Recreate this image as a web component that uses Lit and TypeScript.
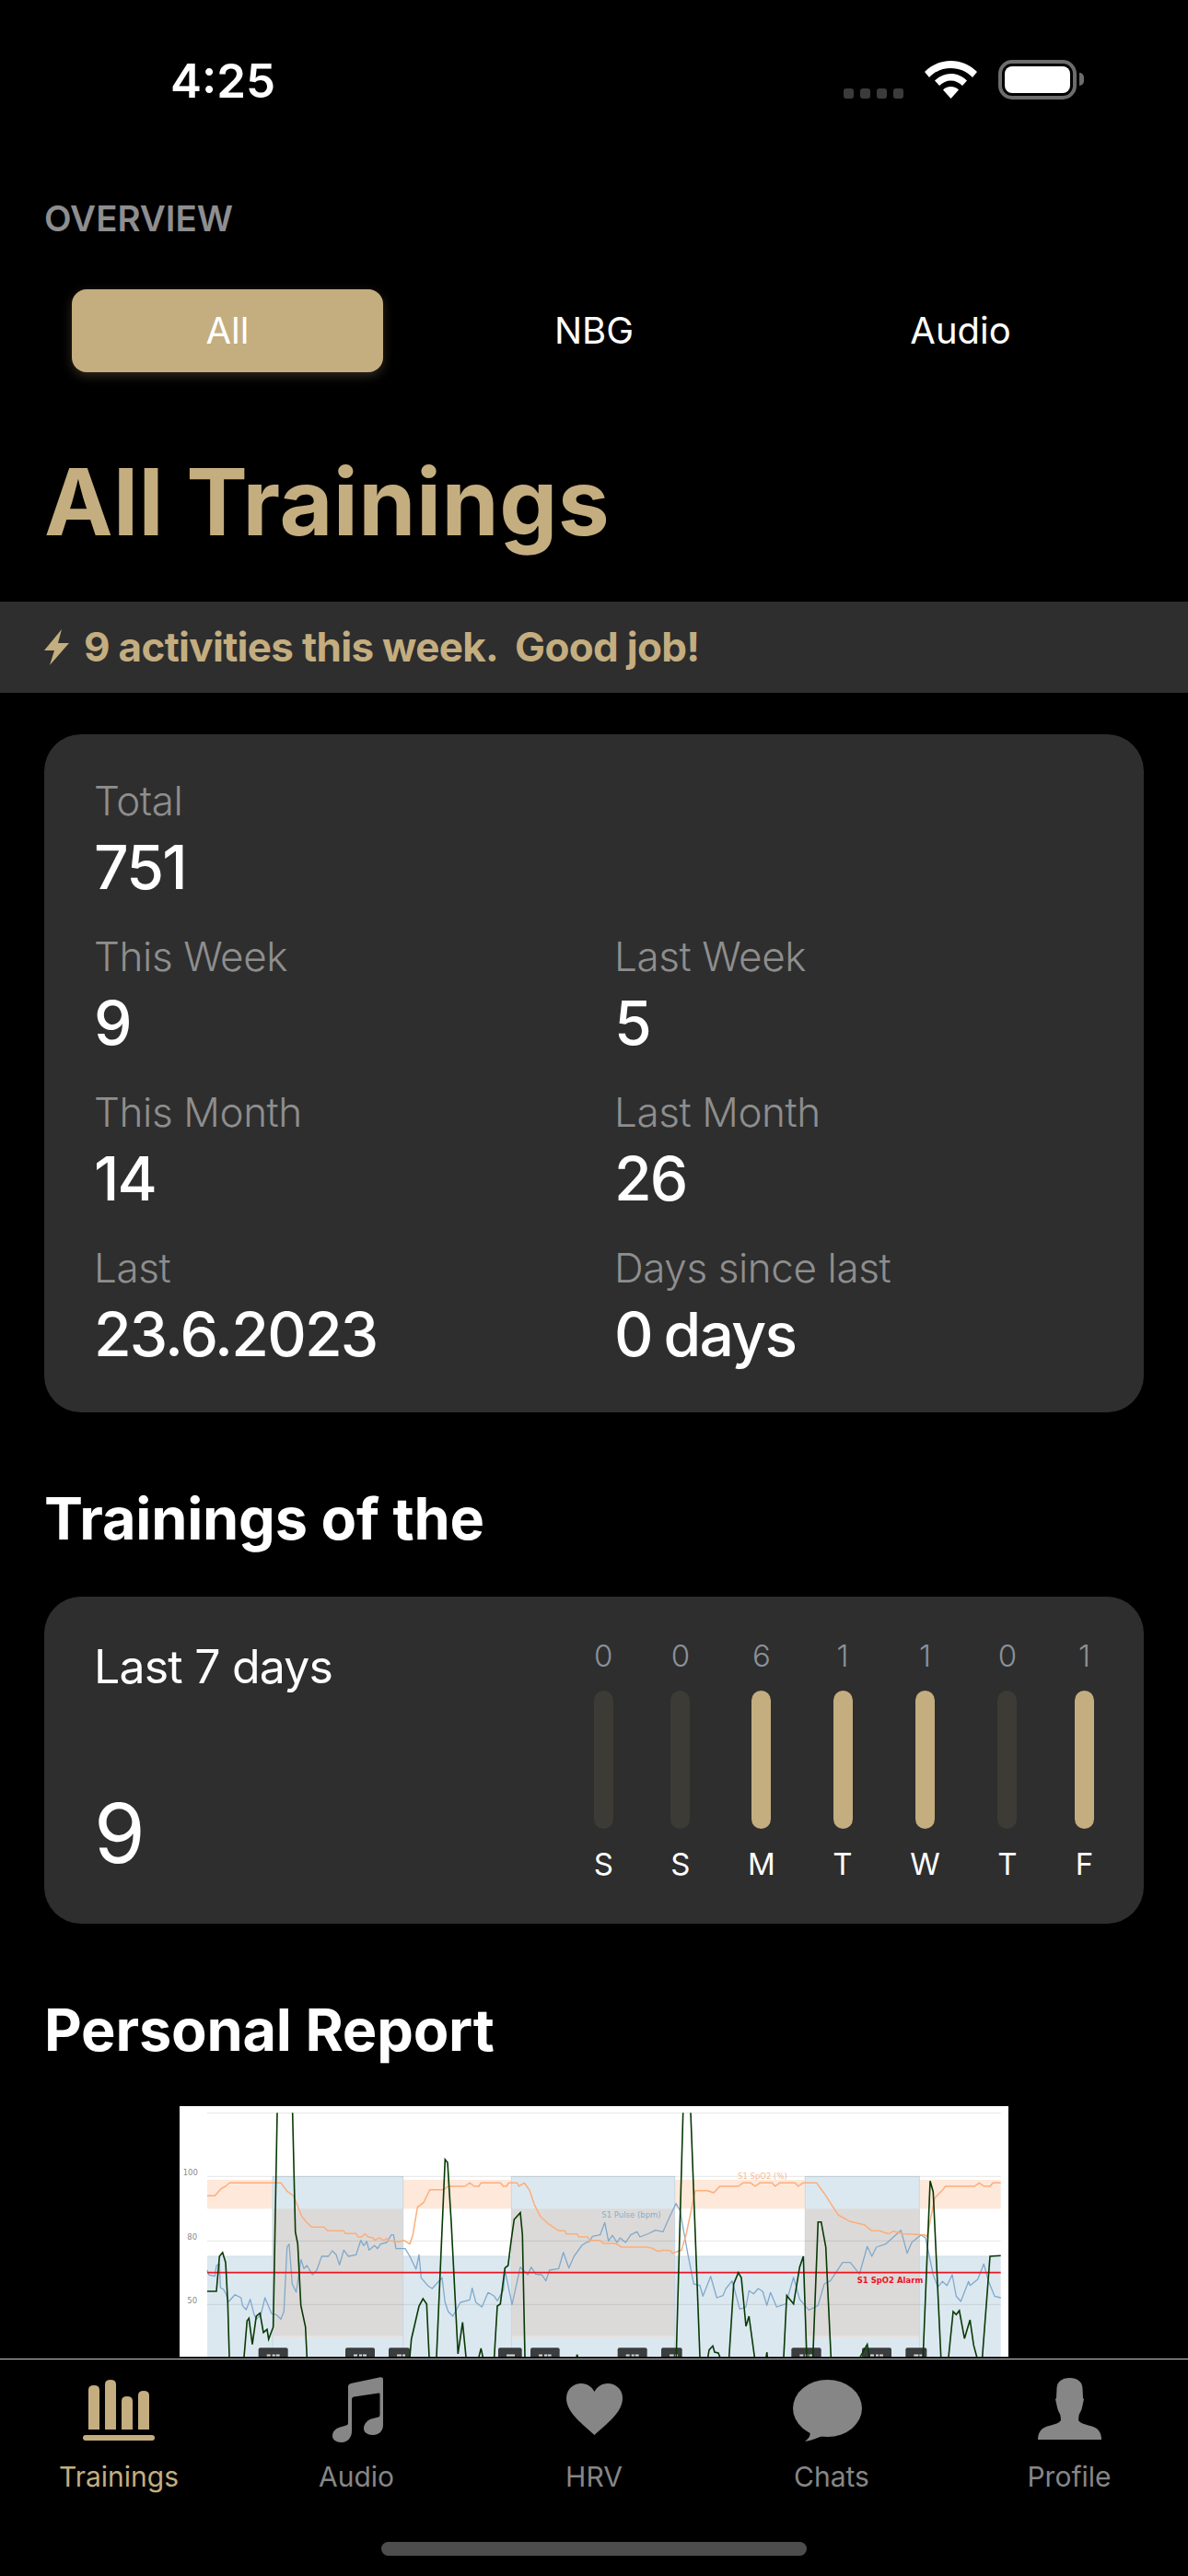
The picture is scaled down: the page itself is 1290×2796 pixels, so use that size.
import { LitElement, css, html, svg } from "lit";
import { customElement } from "lit/decorators.js";

type Pt = [number, number];

// traces are read off the reference crops: "l" points come from the left crop, "r" from the right one
const lx = (x: number) => x / 3 - 5;
const rx = (x: number) => x / 3 + 445;
const py = (y: number) => y / 3 - 7;
const line = (l: Pt[], r: Pt[] = []) =>
  [...l.map(([x, y]) => `${lx(x).toFixed(1)},${py(y).toFixed(1)}`), ...r.map(([x, y]) => `${rx(x).toFixed(1)},${py(y).toFixed(1)}`)].join(" ");

const ORANGE_L: Pt[] = [[105,313],[130,313],[150,290],[165,282],[178,271],[318,271],[345,271],[365,298],[385,312],[395,335],[412,378],[425,395],[445,415],[485,415],[497,427],[550,427],[555,436],[590,436],[596,447],[608,447],[618,437],[630,447],[645,450],[650,458],[665,450],[680,458],[690,452],[700,460],[730,463],[745,458],[765,470],[775,440],[790,350],[810,335],[830,293],[875,293],[890,282],[945,282],[960,271],[975,282],[990,282],[997,271],[1060,271],[1070,282],[1080,282],[1087,271],[1115,271],[1120,282],[1138,271],[1155,295],[1170,340],[1190,380],[1215,403],[1250,427],[1270,427],[1275,437],[1310,437],[1315,447],[1345,447]];
const ORANGE_R: Pt[] = [[0,458],[35,458],[45,468],[85,468],[105,480],[185,480],[200,482],[225,494],[240,490],[265,492],[270,500],[300,490],[315,440],[345,296],[385,296],[405,303],[425,282],[485,282],[500,271],[525,271],[540,282],[555,271],[595,271],[605,282],[620,271],[670,271],[680,282],[695,271],[740,271],[765,305],[810,375],[850,397],[895,407],[920,427],[945,427],[975,437],[990,428],[1020,437],[1035,437],[1090,440],[1100,445],[1125,320],[1150,295],[1160,282],[1255,282],[1270,271],[1285,282],[1305,282],[1315,271],[1340,271]];
const BLUE_L: Pt[] = [[105,555],[110,570],[130,575],[135,540],[145,535],[148,612],[158,618],[165,630],[175,658],[195,635],[215,645],[220,670],[232,684],[245,650],[258,700],[265,715],[280,700],[293,645],[315,697],[330,700],[345,715],[355,690],[365,480],[372,470],[382,600],[395,627],[410,520],[420,550],[430,540],[448,570],[462,555],[478,510],[500,510],[512,492],[525,505],[536,538],[550,490],[565,510],[590,505],[605,458],[615,475],[625,462],[632,490],[650,475],[660,485],[670,470],[690,465],[705,440],[712,440],[720,485],[750,485],[765,510],[785,552],[795,505],[802,580],[825,607],[838,615],[870,580],[880,660],[890,690],[905,705],[930,660],[960,652],[968,613],[980,660],[1000,675],[1020,628],[1040,640],[1050,655],[1070,620],[1075,555],[1098,667],[1115,590],[1125,545],[1150,570],[1160,545],[1175,568],[1195,570],[1208,590],[1220,555],[1250,550],[1265,497],[1283,548],[1300,510],[1325,475],[1340,465]];
const BLUE_R: Pt[] = [[0,462],[10,445],[35,440],[50,400],[62,460],[75,442],[90,465],[100,450],[118,465],[135,440],[155,430],[165,447],[195,435],[215,425],[240,430],[262,380],[282,338],[295,360],[320,500],[340,600],[360,605],[370,640],[395,575],[415,645],[435,638],[445,615],[465,590],[490,682],[510,675],[520,622],[535,632],[550,615],[565,625],[578,670],[590,628],[610,675],[640,665],[665,578],[685,650],[715,685],[745,670],[765,600],[785,590],[825,530],[850,530],[880,568],[905,478],[920,510],[935,480],[965,470],[1015,425],[1035,500],[1050,465],[1080,440],[1095,450],[1120,570],[1135,610],[1150,592],[1165,605],[1182,570],[1195,640],[1210,657],[1235,592],[1240,605],[1265,585],[1285,535],[1300,590],[1320,640],[1340,645]];
const GREEN_L: Pt[][] = [
  [[105,624],[135,624],[145,510],[155,498],[165,530],[172,660],[177,838]],
  [[225,838],[235,720],[241,712],[252,797],[265,705],[277,695],[288,758],[300,748],[305,780],[320,740],[333,43]],
  [[383,43],[392,430],[400,470],[410,670],[425,740],[430,838]],
  [[765,838],[770,780],[785,715],[795,672],[808,648],[820,665],[828,838]],
  [[852,838],[880,195],[888,205],[900,400],[922,828],[937,725],[948,838]],
  [[990,838],[997,810],[1003,838]],
  [[1040,838],[1050,672],[1060,665],[1075,548],[1085,540],[1095,460],[1105,390],[1125,368],[1132,440],[1140,838]],
  [[1308,838],[1310,830],[1312,838]],
];
const GREEN_R: Pt[][] = [
  [[283,838],[305,43]],
  [[330,43],[360,838]],
  [[386,838],[390,815],[402,802],[408,822],[420,825],[425,838]],
  [[455,838],[470,600],[485,563],[495,580],[510,738],[520,705],[538,838]],
  [[576,838],[578,822],[580,838]],
  [[633,838],[643,638],[665,665],[685,545],[697,510],[708,838]],
  [[728,838],[745,398],[755,398],[770,480],[787,838]],
  [[882,838],[905,797],[912,838]],
  [[1087,838],[1110,265],[1120,300],[1145,838]],
  [[1170,838],[1185,690],[1195,700],[1205,687],[1222,778],[1240,717],[1252,800],[1262,838]],
  [[1280,838],[1305,510],[1340,508]],
];
// x ranges of the "sleep" spans, in page-relative chart coordinates
const SPANS: [number, number][] = [[lx(318), lx(743)], [lx(1096), rx(278)], [rx(703), rx(1075)]];
const AWAKE: [number, number][] = [[lx(105), lx(318)], [lx(743), lx(1096)], [rx(278), rx(703)], [rx(1075), rx(1340)]];
const TAGS: [number, number][] = [[lx(272), lx(368)], [lx(555), lx(651)], [lx(696), lx(765)], [lx(1053), lx(1130)], [lx(1158), lx(1253)], [rx(92), rx(188)], [rx(234), rx(302)], [rx(658), rx(755)], [rx(888), rx(984)], [rx(1030), rx(1099)]];

const WEEK = [
  { n: 0, d: "S" }, { n: 0, d: "S" }, { n: 6, d: "M" }, { n: 1, d: "T" },
  { n: 1, d: "W" }, { n: 0, d: "T" }, { n: 1, d: "F" },
];

const STATS = [
  ["This Week", "9"], ["Last Week", "5"],
  ["This Month", "14"], ["Last Month", "26"],
  ["Last", "23.6.2023"], ["Days since last", "0 days"],
];

@customElement("app-root")
export class AppRoot extends LitElement {
  static styles = css`
    :host {
      display: flex;
      flex-direction: column;
      width: 1290px;
      height: 2796px;
      overflow: hidden;
      background: #000;
      color: #fff;
      font-family: Inter, "Liberation Sans", sans-serif;
    }
    .status {
      flex: none;
      height: 215px;
      display: flex;
      align-items: flex-start;
      padding: 65px 121px 0 185px;
      box-sizing: border-box;
    }
    .time {
      font-size: 51px;
      font-weight: 600;
      line-height: 44px;
      margin-top: 1px;
      flex: 1;
    }
    .sys {
      display: flex;
      align-items: flex-end;
      height: 43px;
    }
    .dots {
      display: flex;
      gap: 7px;
      margin: 0 23px 1px 0;
    }
    .dots i {
      width: 11px;
      height: 11px;
      border-radius: 3px;
      background: #3b3b3b;
    }
    .wifi {
      display: block;
      margin: 0 23px 1px 0;
    }
    .battery {
      position: relative;
      width: 85px;
      height: 43px;
      box-sizing: border-box;
      border: 4px solid #6d6d6d;
      border-radius: 15px;
      padding: 3px;
    }
    .battery b {
      display: block;
      height: 100%;
      background: #fff;
      border-radius: 8px;
    }
    .battery::after {
      content: "";
      position: absolute;
      right: -12px;
      top: 10px;
      width: 5px;
      height: 14px;
      background: #6d6d6d;
      border-radius: 0 6px 6px 0;
    }
    main {
      flex: 1;
      min-height: 0;
      overflow: hidden;
    }
    .eyebrow {
      margin: 0 0 0 48px;
      font-size: 38.5px;
      line-height: 44px;
      font-weight: 600;
      color: #8e8e90;
    }
    .tabs {
      display: grid;
      grid-template-columns: repeat(3, 1fr);
      margin: 55px 48px 0;
      height: 90px;
    }
    .tabs span {
      display: flex;
      align-items: center;
      justify-content: center;
      font-size: 40px;
      padding-bottom: 2px;
      margin: 0 30px;
      border-radius: 16px;
    }
    .tabs .on {
      background: #c4ad7f;
      box-shadow: 0 4px 12px rgba(196, 173, 127, 0.25);
    }
    h1 {
      margin: 81px 0 0 48px;
      font-size: 100px;
      line-height: 120px;
      font-weight: 700;
      letter-spacing: 0.4px;
      color: #c4ad7f;
    }
    .banner {
      margin-top: 48px;
      height: 99px;
      background: #2e2e2e;
      display: flex;
      align-items: center;
      gap: 16px;
      padding-left: 48px;
      font-size: 44px;
      font-weight: 700;
      letter-spacing: -0.7px;
      color: #c4ad7f;
      white-space: pre;
    }
    .banner span {
      margin-top: -2px;
    }
    .card {
      margin: 45px 48px 0;
      background: #2e2e2e;
      border-radius: 40px;
    }
    .stats {
      display: grid;
      grid-template-columns: 565px 1fr;
      row-gap: 27px;
      padding: 42px 55px 45px 54px;
    }
    .total {
      grid-column: 1 / -1;
    }
    .label {
      font-size: 44px;
      line-height: 60px;
      font-weight: 300;
      letter-spacing: -0.4px;
      color: #8e8e8e;
    }
    .value {
      margin-top: 2px;
      font-size: 66px;
      line-height: 80px;
      font-weight: 450;
      letter-spacing: -1.8px;
      word-spacing: -3px;
    }
    h2 {
      margin: 75px 0 0 48px;
      font-size: 63px;
      line-height: 80px;
      font-weight: 700;
      letter-spacing: -0.2px;
    }
    .week {
      height: 355px;
      box-sizing: border-box;
      display: flex;
      justify-content: space-between;
      padding: 0 54px;
    }
    .week-left {
      padding-top: 46px;
      display: flex;
      flex-direction: column;
    }
    .week-title {
      font-size: 50px;
      line-height: 60px;
      letter-spacing: -0.8px;
    }
    .week-num {
      margin-top: 96px;
      font-size: 90px;
      line-height: 110px;
    }
    .bars {
      display: flex;
      gap: 62.5px;
      padding-top: 44px;
    }
    .day {
      display: flex;
      flex-direction: column;
      align-items: center;
      font-size: 33px;
      line-height: 40px;
    }
    .day em {
      font-style: normal;
      font-weight: 300;
      color: #8a9199;
    }
    .bar {
      width: 21px;
      height: 150px;
      margin: 18px 0 18px;
      border-radius: 11px;
      background: #3c3b35;
    }
    .bar.on {
      background: #c4ad7f;
    }
    .chart {
      display: block;
      margin: 43px 0 0 195px;
    }
    .chart text {
      font-family: "DejaVu Sans", sans-serif;
      font-size: 8.5px;
    }
    nav {
      flex: none;
      height: 236px;
      border-top: 1px solid #c8c8c8;
      box-sizing: border-box;
      background: #000;
      display: flex;
      flex-direction: column;
    }
    .items {
      display: grid;
      grid-template-columns: repeat(5, 258px);
    }
    .item {
      height: 197px;
      display: flex;
      flex-direction: column;
      align-items: center;
      color: #868686;
      font-size: 30px;
    }
    .item.on {
      color: #c4ad7f;
    }
    .ico {
      height: 72px;
      margin-top: 19px;
      display: flex;
      align-items: flex-start;
      justify-content: center;
    }
    .i-bars { margin-top: 3px; }
    .i-note { margin-left: 3px; }
    .i-heart { margin-top: 7px; }
    .i-chat { margin: 3px 9px 0 0; }
    .i-user { margin-top: 1px; }
    .item span {
      margin-top: 18px;
      line-height: 36px;
    }
    .home {
      width: 462px;
      height: 15px;
      margin: 1px auto 0;
      border-radius: 8px;
      background: #4d4d4d;
    }
  `;

  renderChart() {
    return html`<svg class="chart" width="900" height="272" viewBox="0 0 900 272">
      <rect width="900" height="272" fill="#fff"></rect>
      ${AWAKE.map(([a, b]) => svg`
        <rect x=${a} y=${py(261)} width=${b - a} height=${py(355) - py(261)} fill="#fde8da"></rect>
        <rect x=${a} y=${py(510)} width=${b - a} height=${272 - py(510)} fill="#dce8f0"></rect>
        <path d="M${a} ${py(510)}H${b}" stroke="#cfdce6" stroke-width="1"></path>`)}
      ${SPANS.map(([a, b]) => svg`
        <rect x=${a} y=${py(250)} width=${b - a} height=${272 - py(250)} fill="#dce8f0"></rect>
        <rect x=${a} y=${py(355)} width=${b - a} height=${py(770) - py(355)} fill="#dcdad8"></rect>
        <path d="M${a} ${py(770)}H${b}" stroke="#f3dccd" stroke-width="1"></path>
        <path d="M${a} ${py(250)}H${b}" stroke="#cfdce6" stroke-width="1"></path>
        <path d="M${a} ${py(250)}V272M${b} ${py(250)}V272" stroke="#c9d6e0" stroke-width="1"></path>`)}
      ${[43, 250, 460, 667].map((y) => svg`
        <path d="M${lx(105)} ${py(y)}H${rx(1340)}" stroke="#000" stroke-opacity=".1" stroke-width="1"></path>`)}
      <text x=${lx(26)} y=${py(246)} fill="#8a8a8a">100</text>
      <text x=${lx(40)} y=${py(456)} fill="#8a8a8a">80</text>
      <text x=${lx(40)} y=${py(663)} fill="#8a8a8a">50</text>
      <text x=${rx(483)} y=${py(259)} fill="#fbb98f">S1 SpO2 (%)</text>
      <text x=${rx(40)} y=${py(385)} fill="#87aecd">S1 Pulse (bpm)</text>
      <text x=${rx(872)} y=${py(597)} fill="#f0101c" font-weight="700">S1 SpO2 Alarm</text>
      ${TAGS.map(([a, b]) => svg`
        <rect x=${a} y=${py(808)} width=${b - a} height="20" rx="2" fill="#3a3c3e"></rect>
        <path d="M${a + 9} 270.5H${a + 13}M${a + 15} 270.5H${a + 18}M${b - 13} 270.5H${b - 9}" stroke="#d8d8d8" stroke-width="2"></path>`)}
      <polyline points=${line(BLUE_L, BLUE_R)} fill="none" stroke="#7fa9cc" stroke-width="1.3" stroke-linejoin="round"></polyline>
      <polyline points=${line(ORANGE_L, ORANGE_R)} fill="none" stroke="#fbae7c" stroke-width="1.5" stroke-linejoin="round"></polyline>
      <path d="M${lx(105)} ${py(563)}H${rx(1340)}" stroke="#ea1520" stroke-width="1.6"></path>
      ${GREEN_L.map((p) => svg`<polyline points=${line(p)} fill="none" stroke="#083a04" stroke-width="1.6"></polyline>`)}
      ${GREEN_R.map((p) => svg`<polyline points=${line([], p)} fill="none" stroke="#083a04" stroke-width="1.6"></polyline>`)}
    </svg>`;
  }

  render() {
    return html`
      <div class="status">
        <div class="time">4:25</div>
        <div class="sys">
          <div class="dots"><i></i><i></i><i></i><i></i></div>
          <svg class="wifi" width="57" height="41" viewBox="0 0 57 41" fill="#fff">
            <path d="M28.5 0C39 0 49 4 57 12L52 18C46 11.5 37.5 8 28.5 8C19.5 8 11 11.5 5 18L0 12C8 4 18 0 28.5 0Z"></path>
            <path d="M28.5 14C35 14 41 16.5 46 21.5L41 27C37.5 23.5 33 21.5 28.5 21.5C24 21.5 19.5 23.5 16 27L11 21.5C16 16.5 22 14 28.5 14Z"></path>
            <path d="M28.5 28C32 28 35 29.5 37 31.5L28.5 41L20 31.5C22 29.5 25 28 28.5 28Z"></path>
          </svg>
          <div class="battery"><b></b></div>
        </div>
      </div>
      <main>
        <p class="eyebrow">OVERVIEW</p>
        <div class="tabs">
          <span class="on">All</span>
          <span>NBG</span>
          <span>Audio</span>
        </div>
        <h1>All Trainings</h1>
        <div class="banner">
          <svg width="27" height="39" viewBox="0 0 27 39" fill="#c4ad7f"><path d="M19 0L0 23H11L6 39L27 15H15Z"></path></svg>
          <span>9 activities this week.  Good job!</span>
        </div>
        <section class="card stats">
          <div class="total">
            <div class="label">Total</div>
            <div class="value">751</div>
          </div>
          ${STATS.map(([l, v]) => html`<div>
            <div class="label">${l}</div>
            <div class="value">${v}</div>
          </div>`)}
        </section>
        <h2>Trainings of the</h2>
        <section class="card week">
          <div class="week-left">
            <div class="week-title">Last 7 days</div>
            <div class="week-num">9</div>
          </div>
          <div class="bars">
            ${WEEK.map((w) => html`<div class="day">
              <em>${w.n}</em>
              <div class="bar ${w.n > 0 ? "on" : ""}"></div>
              <div>${w.d}</div>
            </div>`)}
          </div>
        </section>
        <h2 class="report">Personal Report</h2>
        ${this.renderChart()}
      </main>
      <nav>
        <div class="items">
          <div class="item on">
            <div class="ico">
              <svg class="i-bars" width="78" height="66" viewBox="0 0 78 66" fill="#c4ad7f">
                <path d="M6 54V11Q6 6 12 6Q18 6 18 11V54Z"></path>
                <path d="M24 54V5Q24 0 30 0Q36 0 36 5V54Z"></path>
                <path d="M42 54V23Q42 18 48 18Q54 18 54 23V54Z"></path>
                <path d="M60 54V17Q60 12 66 12Q72 12 72 17V54Z"></path>
                <rect x="0" y="60" width="78" height="6" rx="3"></rect>
              </svg>
            </div>
            <span>Trainings</span>
          </div>
          <div class="item">
            <div class="ico">
              <svg class="i-note" width="55" height="71" viewBox="0 0 55 71" fill="#868686">
                <path d="M17 10Q17 8 20 7L52 .3Q55 0 55 3V52C55 59 50 63 44 63C38 63 34 60 34 56C34 50 39 46 44 45L50 43.5Q51.5 43 51.5 41V18.5Q51.5 17 50 17.5L23 21.5Q21 22 21 24V59C21 66 16 71 10 71C4 71 0 68 0 64C0 58 5 55 10 54L15 52.5Q17 52 17 50Z"></path>
              </svg>
            </div>
            <span>Audio</span>
          </div>
          <div class="item">
            <div class="ico">
              <svg class="i-heart" width="61" height="56" viewBox="0 0 61 56" fill="#868686">
                <path d="M30.5 56C18 44 0 32 0 16C0 6 8 0 16 0C23 0 28 4 30.5 9C33 4 38 0 45 0C53 0 61 6 61 16C61 32 43 44 30.5 56Z"></path>
              </svg>
            </div>
            <span>HRV</span>
          </div>
          <div class="item">
            <div class="ico">
              <svg class="i-chat" width="75" height="67" viewBox="0 0 75 67" fill="#868686">
                <ellipse cx="37.5" cy="31" rx="37.5" ry="31"></ellipse>
                <path d="M18 56C20 60 17 64 13 67C20 66 26 63 32 61Z"></path>
              </svg>
            </div>
            <span>Chats</span>
          </div>
          <div class="item">
            <div class="ico">
              <svg class="i-user" width="69" height="67" viewBox="0 0 69 67" fill="#868686">
                <path d="M34.5 0C43 0 48 4 48.5 11L49 22L50 23L48 32C47 37 45 38 44.5 41L44 46C46 50 55 51 60 53C66 55 69 60 69 67H0C0 60 3 55 9 53C14 51 23 50 25 46L24.5 41C24 38 22 37 21 32L19 23L20 22L20.5 11C21 4 26 0 34.5 0Z"></path>
              </svg>
            </div>
            <span>Profile</span>
          </div>
        </div>
        <div class="home"></div>
      </nav>
    `;
  }
}
